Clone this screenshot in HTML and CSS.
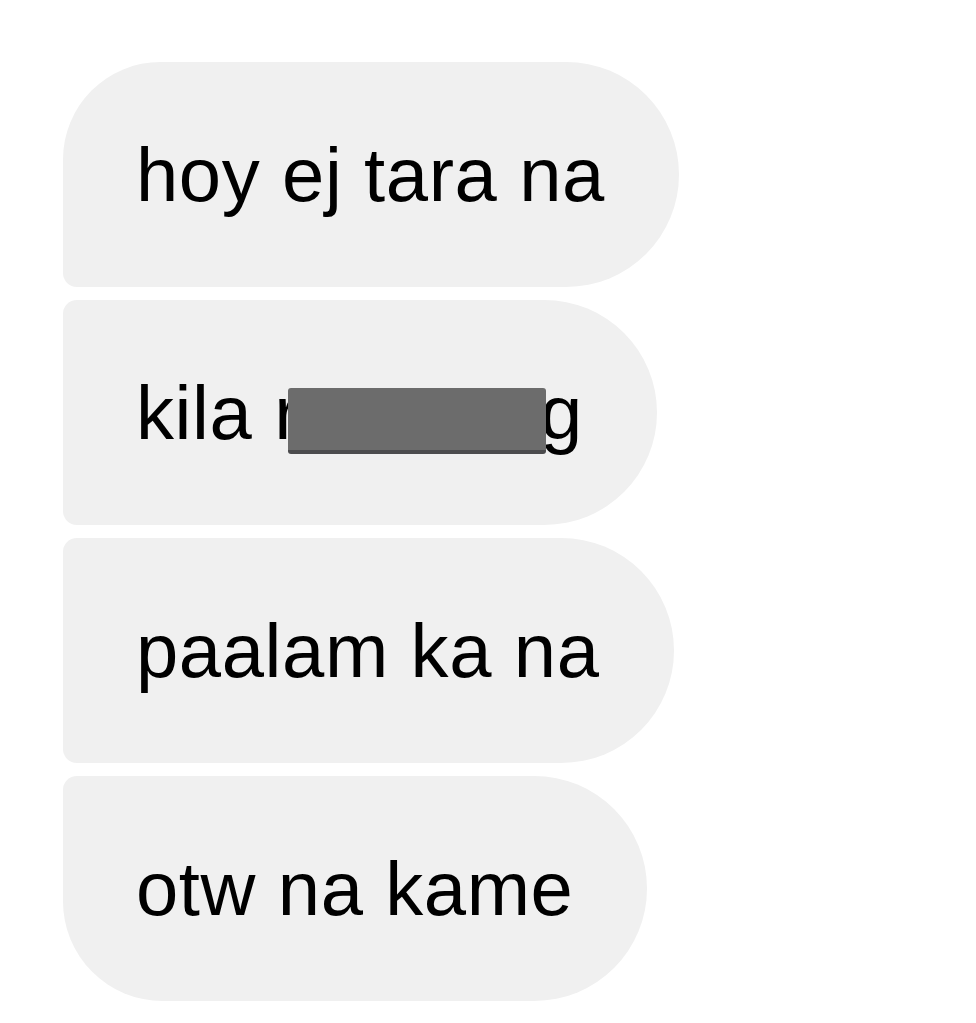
FILE: index.html
```html
<!DOCTYPE html>
<html lang="tl">
<head>
<meta charset="utf-8">
<title>Messages</title>
<link rel="stylesheet" href="styles.css">
</head>
<body>
  <div class="thread">
    <div class="bubble first"><span class="text">hoy ej tara na</span></div>
    <div class="bubble middle"><span class="text">kila r<span class="redacted"></span>g</span></div>
    <div class="bubble middle"><span class="text">paalam ka na</span></div>
    <div class="bubble last"><span class="text">otw na kame</span></div>
  </div>
</body>
</html>
```
FILE: styles.css
```css
html, body {
  margin: 0;
  padding: 0;
  background: #ffffff;
}

body {
  padding: 62px 0 0 63px;
  font-family: "Liberation Sans", Arial, sans-serif;
}

.thread {
  display: flex;
  flex-direction: column;
  align-items: flex-start;
  gap: 13px;
}

.bubble {
  box-sizing: border-box;
  height: 225px;
  display: flex;
  align-items: center;
  padding: 0 74px 0 73px;
  background: #f0f0f0;
  color: #000000;
  font-size: 76px;
  line-height: 1;
  letter-spacing: 0.6px;
  white-space: nowrap;
  border-radius: 14px 113px 113px 14px;
}

.bubble.first {
  border-radius: 98px 113px 113px 14px;
}

.bubble.last {
  border-radius: 14px 113px 113px 100px;
}

.text {
  display: block;
}

.redacted {
  position: relative;
  display: inline-block;
  width: 240px;
  height: 1px;
}

.redacted::after {
  content: "";
  position: absolute;
  left: -12px;
  bottom: -15px;
  width: 258px;
  height: 66px;
  box-sizing: border-box;
  background: #6c6c6c;
  border-bottom: 4px solid #4c4c4e;
  border-radius: 3px;
}
```
